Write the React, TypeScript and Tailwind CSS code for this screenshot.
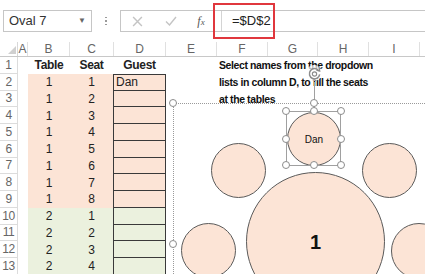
import React from 'react';

const font = { fontFamily: '"Liberation Sans", Arial, sans-serif' };

const cols = [
  { name: 'A', w: 10 },
  { name: 'B', w: 42 },
  { name: 'C', w: 44 },
  { name: 'D', w: 52 },
  { name: 'E', w: 51 },
  { name: 'F', w: 51 },
  { name: 'G', w: 50 },
  { name: 'H', w: 51 },
  { name: 'I', w: 51 },
  { name: '', w: 60 },
];

const rows = [
  { table: '1', seat: '1', guest: 'Dan' },
  { table: '1', seat: '2' },
  { table: '1', seat: '3' },
  { table: '1', seat: '4' },
  { table: '1', seat: '5' },
  { table: '1', seat: '6' },
  { table: '1', seat: '7' },
  { table: '1', seat: '8' },
  { table: '2', seat: '1' },
  { table: '2', seat: '2' },
  { table: '2', seat: '3' },
  { table: '2', seat: '4' },
];

function Handle({ x, y }: { x: number; y: number }) {
  return (
    <div
      className="absolute w-[8px] h-[8px] rounded-full bg-white border-[1.5px] border-[#8c8c8c]"
      style={{ left: x - 4, top: y - 4 }}
    />
  );
}

function Seat({ x, y, size, label, big }: { x: number; y: number; size: number; label?: string; big?: boolean }) {
  return (
    <div
      className="absolute rounded-full bg-[#fce4d6] border-[1.5px] border-[#5a5a5a] flex items-center justify-center text-[#111]"
      style={{ left: x, top: y, width: size, height: size }}
    >
      {label && <span className={big ? 'text-[20px] font-bold' : 'text-[10px]'}>{label}</span>}
    </div>
  );
}

export default function App() {
  return (
    <div className="relative w-[425px] h-[274px] overflow-hidden bg-white text-[#222]" style={font}>
      {/* toolbar */}
      <div className="h-[42px] flex items-start pt-[10px] pl-[3px]">
        <div className="w-[89px] h-[22px] border border-[#c6c6c6] flex items-center justify-between px-[5px] text-[13px] text-[#333]">
          <span>Oval 7</span>
          <span className="text-[8px] text-[#666]">▼</span>
        </div>
        <div className="w-[28px] h-[22px] flex flex-col items-center justify-center gap-[2px]">
          <span className="w-[1.5px] h-[1.5px] bg-[#9a9a9a]" />
          <span className="w-[1.5px] h-[1.5px] bg-[#9a9a9a]" />
          <span className="w-[1.5px] h-[1.5px] bg-[#9a9a9a]" />
        </div>
        <div className="flex-1 h-[22px] border border-[#c6c6c6] border-r-0 flex items-center">
          <span className="w-[32px] flex justify-center">
            <svg width="11" height="11" viewBox="0 0 10 10"><path d="M1 1L9 9M9 1L1 9" stroke="#c4c4c4" strokeWidth="1.3" /></svg>
          </span>
          <span className="w-[36px] flex justify-center">
            <svg width="12" height="10" viewBox="0 0 12 10"><path d="M1 5.5L4.5 9L11 1" fill="none" stroke="#c4c4c4" strokeWidth="1.4" /></svg>
          </span>
          <span className="w-[24px] text-center text-[12px] italic text-[#555]" style={{ fontFamily: '"Liberation Serif", serif' }}>
            f<span className="text-[9px]">x</span>
          </span>
          <div className="ml-[8px] h-full flex-1 border-l border-[#d4d4d4] flex items-center pl-[10px] text-[13px] text-[#222]">
            =$D$2
          </div>
        </div>
      </div>

      {/* column headers */}
      <div className="flex h-[15px] border-b border-[#c8c8c8] text-[12px] text-[#666]">
        <div className="w-[18px] shrink-0 flex items-end justify-end pr-[1px] pb-[2px] border-r border-[#d8d8d8]">
          <svg width="8" height="8" viewBox="0 0 8 8"><path d="M8 0L8 8L0 8Z" fill="#d0d0d0" /></svg>
        </div>
        {cols.map((c, i) => (
          <div
            key={i}
            className="shrink-0 flex items-center justify-center border-r border-[#e0e0e0] leading-none"
            style={{ width: c.w }}
          >
            {c.name}
          </div>
        ))}
      </div>

      {/* rows */}
      <div className="flex flex-col">
        <div className="flex h-[16.75px] items-center text-[12px]">
          <div className="w-[18px] h-full shrink-0 flex items-center justify-center border-r border-b border-[#dcdcdc] text-[#666]">1</div>
          <div className="w-[10px] shrink-0" />
          <div className="w-[42px] shrink-0 text-center font-bold tracking-[-0.3px]">Table</div>
          <div className="w-[43px] shrink-0 text-center font-bold tracking-[-0.3px]">Seat</div>
          <div className="w-[53px] shrink-0 text-center font-bold tracking-[-0.3px]">Guest</div>
        </div>
        {rows.map((r, i) => (
          <div key={i} className="flex h-[16.75px] items-stretch text-[12px]">
            <div className="w-[18px] shrink-0 flex items-center justify-center border-r border-b border-[#dcdcdc] text-[#666] tracking-[-0.5px]">
              {i + 2}
            </div>
            <div className="w-[10px] shrink-0" />
            <div className={`w-[85px] shrink-0 flex items-center ${i < 8 ? 'bg-[#fce4d6]' : 'bg-[#ebf1de]'}`}>
              <span className="w-[42px] text-center">{r.table}</span>
              <span className="w-[43px] text-center">{r.seat}</span>
            </div>
            <div className={`w-[53px] shrink-0 flex items-center pl-[2px] border border-[#3a3a3a] ${i > 0 ? 'border-t-0' : ''} ${i < 8 ? 'bg-[#fce4d6]' : 'bg-[#ebf1de]'}`}>
              {r.guest}
            </div>
          </div>
        ))}
      </div>

      {/* red highlight around formula */}
      <div className="absolute left-[213px] top-[3px] w-[62px] h-[36px] border-[2.5px] border-[#e0373d]" />

      {/* instructions text box */}
      <div className="absolute left-[219px] top-[57px] text-[10.5px] font-bold leading-[17px] tracking-[-0.4px] text-[#111]">
        <div>Select names from the dropdown</div>
        <div>lists in column D, to fill the seats</div>
        <div>at the tables</div>
      </div>

      {/* group selection outline */}
      <div className="absolute left-[173px] top-[103px] right-[-2px] bottom-[-2px] border-l border-t border-dotted border-[#9a9a9a]" />

      {/* seats */}
      <Seat x={211} y={143} size={55} />
      <Seat x={362} y={143} size={55} />
      <Seat x={181} y={223} size={55} />
      <Seat x={391} y={223} size={56} />
      <Seat x={246} y={172} size={139} label="1" big />
      <Seat x={287} y={112} size={54} label="Dan" />

      {/* selected shape outline */}
      <div className="absolute left-[286px] top-[111px] w-[55px] h-[55px] border border-[#a0a0a0]" />
      <div className="absolute left-[314px] top-[82px] w-px h-[29px] bg-[#a0a0a0]" />

      {/* rotate handle */}
      <div className="absolute left-[306px] top-[65px] w-[16px] h-[16px] rounded-full bg-white/70 flex items-center justify-center">
        <svg width="15" height="15" viewBox="0 0 16 16">
          <path d="M12.5 5A5.5 5.5 0 1 0 13.5 9" fill="none" stroke="#8c8c8c" strokeWidth="1.6" />
          <path d="M10 4.5L13.5 5.5L13 1.5" fill="none" stroke="#8c8c8c" strokeWidth="1.4" />
          <circle cx="8" cy="8.5" r="2.3" fill="none" stroke="#8c8c8c" strokeWidth="1.2" />
        </svg>
      </div>

      <Handle x={173} y={103} />
      <Handle x={314} y={103} />
      <Handle x={173} y={244} />
      <Handle x={286} y={111} />
      <Handle x={314} y={111} />
      <Handle x={341} y={111} />
      <Handle x={286} y={139} />
      <Handle x={341} y={139} />
      <Handle x={286} y={165} />
      <Handle x={314} y={165} />
      <Handle x={341} y={165} />
    </div>
  );
}
